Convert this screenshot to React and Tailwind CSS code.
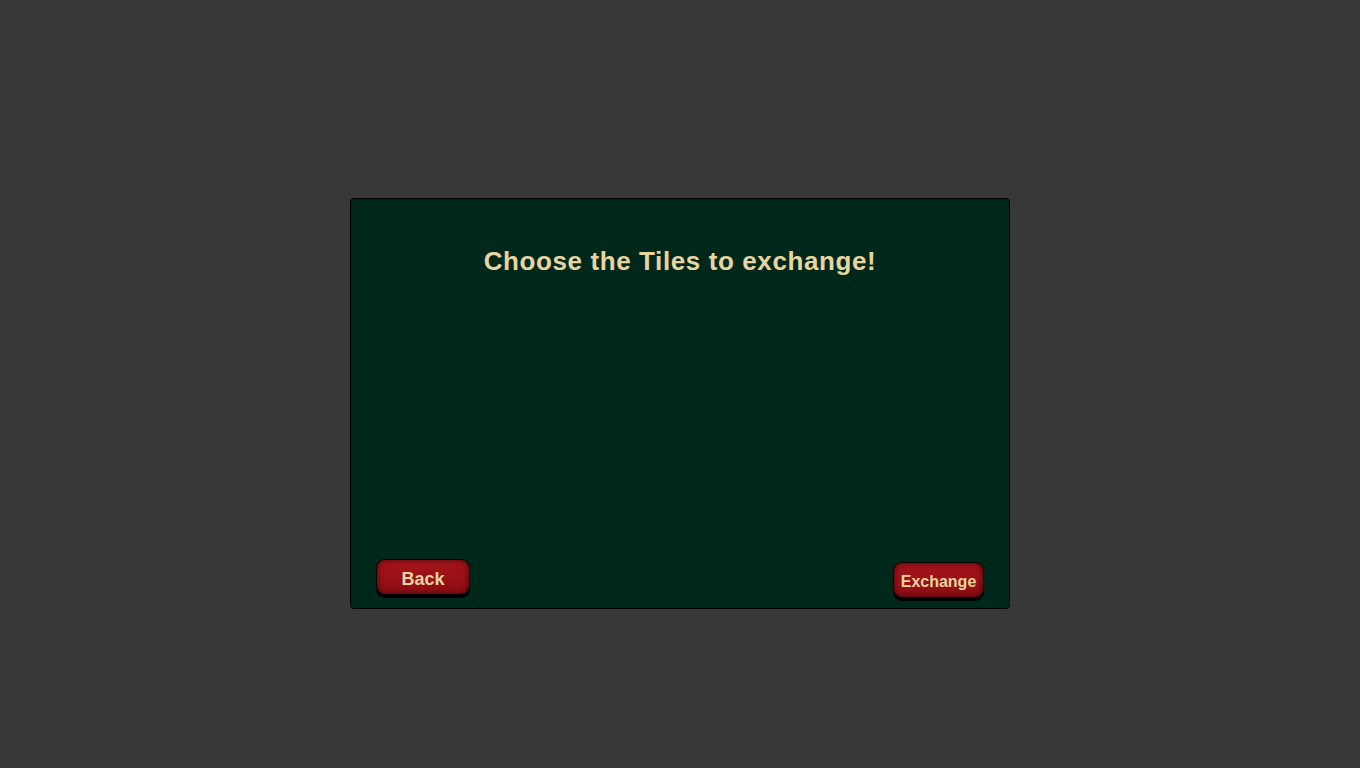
export default function App() {
    return (
        <div className="flex h-[768px] w-[1360px] items-start justify-center bg-[#383838] pt-[198px] font-['Liberation_Sans',Arial,sans-serif]">
            <div className="flex h-[411px] w-[660px] flex-col rounded-[4px] border border-black bg-[#00281a]">
                <h1 className="mt-[43px] text-center text-[26px] font-bold tracking-[0.6px] text-[#e8d4a0]">
                    Choose the Tiles to exchange!
                </h1>
                <div className="flex-1" />
                <div className="flex items-end justify-between pb-[10px] pl-[25px] pr-[25px]">
                    <button className="mb-[3px] h-[36px] w-[94px] rounded-[9px] border border-black bg-gradient-to-b from-[#a6141a] to-[#8c0e13] pt-[4px] text-[18px] font-bold leading-none text-[#e8d4a0] shadow-[inset_0_0_6px_rgba(0,0,0,0.6),0_3px_0_#000]">
                        Back
                    </button>
                    <button className="h-[36px] w-[91px] rounded-[9px] border border-black bg-gradient-to-b from-[#a6141a] to-[#8c0e13] pt-[3px] text-[16px] font-bold leading-none text-[#e8d4a0] shadow-[inset_0_0_6px_rgba(0,0,0,0.6),0_3px_0_#000]">
                        Exchange
                    </button>
                </div>
            </div>
        </div>
    );
}
